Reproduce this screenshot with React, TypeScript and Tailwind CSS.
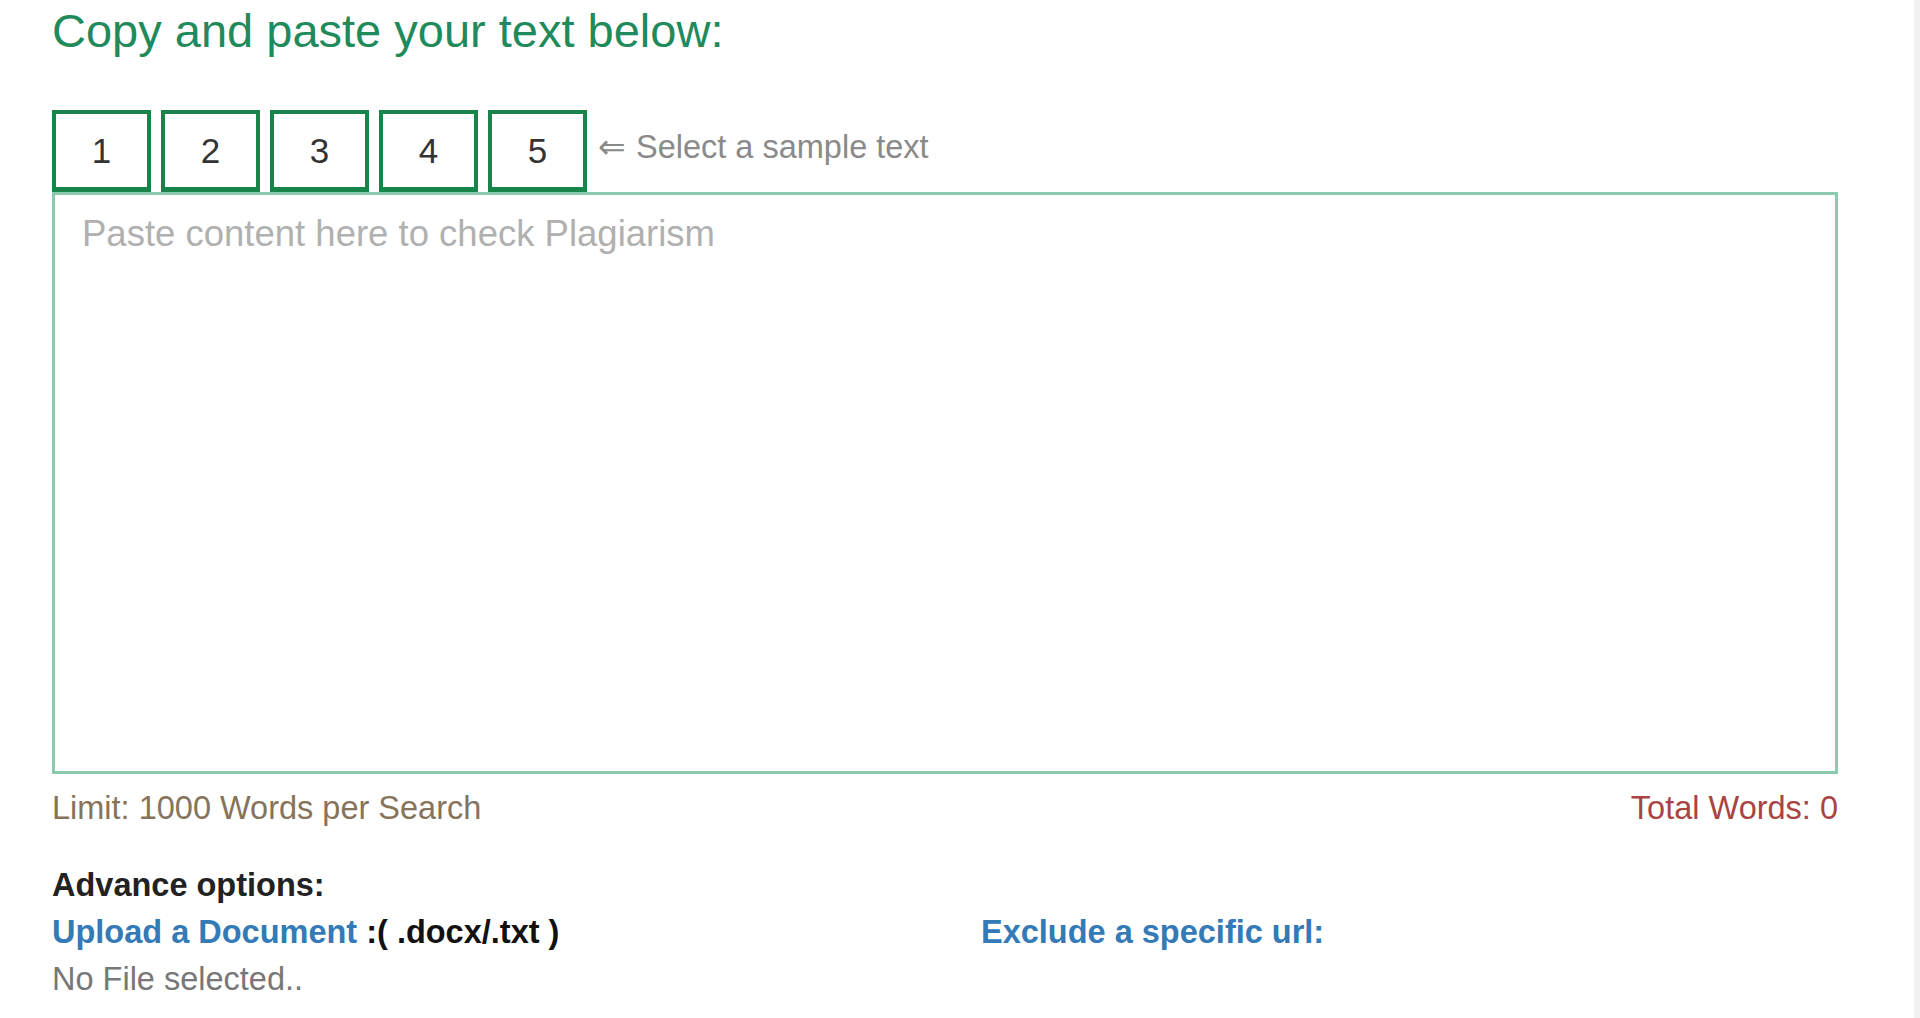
import { useState } from "react";

const samples = ["1", "2", "3", "4", "5"];

export default function App() {
  const [text, setText] = useState("");
  const words = text.trim() ? text.trim().split(/\s+/).length : 0;

  return (
    <div className="flex min-h-screen bg-white font-['Liberation_Sans',Arial,sans-serif]">
      <main className="flex-1 pl-[52px] pr-[76px]">
        <h1 className="pt-[4px] text-[47px] leading-[53px] text-[#1f8a5b]">Copy and paste your text below:</h1>

        {/* sample buttons */}
        <div className="mt-[53px] flex items-center">
          <div className="flex gap-[10px]">
            {samples.map((s) => (
              <button
                key={s}
                className="flex h-[82px] w-[99px] items-center justify-center border-[4px] border-b-[5px] border-[#18844a] bg-white pt-[2px] text-[35px] text-[#333]"
              >
                {s}
              </button>
            ))}
          </div>
          <span className="ml-[11px] -mt-[8px] text-[32.5px] text-[#8a8a8a]">
            <span className="mr-[10px]">⇐</span>Select a sample text
          </span>
        </div>

        {/* text area */}
        <textarea
          value={text}
          onChange={(e) => setText(e.target.value)}
          placeholder="Paste content here to check Plagiarism"
          className="block h-[582px] w-full resize-none border-[3px] border-[#8dc9ae] px-[27px] py-[18px] text-[36.5px] leading-[42px] text-[#333] outline-none placeholder:text-[#b0b0b0]"
        />

        <div className="mt-[11px] flex justify-between text-[32.5px] leading-[47px]">
          <span className="text-[#86735a]">Limit: 1000 Words per Search</span>
          <span className="text-[#a94442]">Total Words: {words}</span>
        </div>

        {/* advance options */}
        <div className="mt-[30px] text-[32.5px] leading-[47px]">
          <p className="font-bold text-[#222]">Advance options:</p>
          <div className="grid grid-cols-[929px_1fr]">
            <div>
              <p className="font-bold">
                <span className="text-[#337ab7]">Upload a Document</span>
                <span className="text-[#111]"> :( .docx/.txt )</span>
              </p>
              <p className="text-[#777]">No File selected..</p>
            </div>
            <p className="font-bold text-[#337ab7]">Exclude a specific url:</p>
          </div>
        </div>
      </main>
      <div className="w-[6px] shrink-0 bg-[#f1f1f1]" />
    </div>
  );
}
